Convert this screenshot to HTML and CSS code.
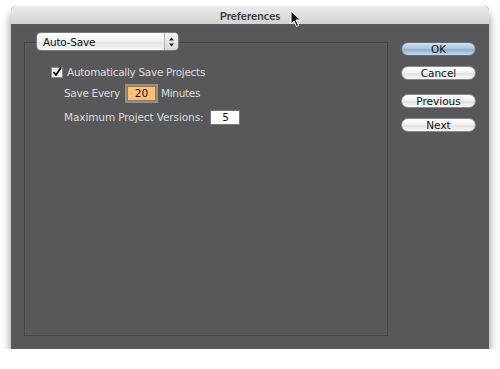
FILE: index.html
```html
<!DOCTYPE html>
<html>
<head>
    <title>Preferences</title>
    <link rel="stylesheet" href="styles.css">
</head>
<body>
    <div class="window">
        <div class="titlebar">
            <span class="title">Preferences</span>
        </div>
        <div class="content">
            <div class="main">
                <div class="popup">
                    <span class="popup-label">Auto-Save</span>
                    <span class="popup-arrows">
                        <svg width="7" height="10" viewBox="0 0 7 10">
                            <path d="M3.5 0.5 L6 3.5 L1 3.5 Z" fill="#222"/>
                            <path d="M3.5 9.5 L6 6.5 L1 6.5 Z" fill="#222"/>
                        </svg>
                    </span>
                </div>
                <div class="panel">
                    <div class="row check-row">
                        <span class="checkbox">
                            <svg width="10" height="10" viewBox="0 0 10 10">
                                <path d="M1.5 5 L4 8 L9 0.5" fill="none" stroke="#111" stroke-width="1.8"/>
                            </svg>
                        </span>
                        <span class="label">Automatically Save Projects</span>
                    </div>
                    <div class="row indent">
                        <span class="label">Save Every</span>
                        <span class="field field-focus">20</span>
                        <span class="label">Minutes</span>
                    </div>
                    <div class="row indent">
                        <span class="label wide">Maximum Project Versions:</span>
                        <span class="field field-white">5</span>
                    </div>
                </div>
            </div>
            <div class="buttons">
                <button class="btn btn-default">OK</button>
                <button class="btn">Cancel</button>
                <button class="btn btn-gap">Previous</button>
                <button class="btn">Next</button>
            </div>
        </div>
    </div>

    <!-- mouse pointer over the title bar -->
    <svg class="cursor" width="12" height="18" viewBox="0 0 12 18">
        <path d="M1 1 L1 14 L4 11 L6.5 16.5 L8.5 15.5 L6 10 L10.5 10 Z" fill="#111" stroke="#fff" stroke-width="1"/>
    </svg>
</body>
</html>
```

FILE: styles.css
```css
body {
    margin: 0;
    background-color: #ffffff;
    font-family: "DejaVu Sans", Verdana, sans-serif;
}

.window {
    width: 478px;
    margin: 6px 0 0 11px;
    border-radius: 5px 5px 0 0;
    background-color: #58585a;
    box-shadow: 0 7px 10px rgba(0, 0, 0, 0.45);
}

.titlebar {
    height: 18px;
    display: flex;
    align-items: center;
    justify-content: center;
    border-radius: 5px 5px 0 0;
    background: linear-gradient(#ececec, #d2d2d2);
    border-bottom: 1px solid #5a5a5a;
}

.title {
    font-family: Lato, "DejaVu Sans", sans-serif;
    font-size: 11.5px;
    font-weight: bold;
    color: #3c3c3c;
}

.content {
    display: flex;
    height: 303px;
    padding: 8px 13px 13px 13px;
}

.main {
    width: 364px;
    display: flex;
    flex-direction: column;
}

.popup {
    position: relative;
    z-index: 1;
    width: 141px;
    height: 17px;
    margin-left: 13px;
    display: flex;
    align-items: center;
    border-radius: 4px;
    background: linear-gradient(#ffffff, #f0f0f0 50%, #e2e2e2 51%, #f6f6f6);
    box-shadow: 0 0 0 1px #7a7a7a;
}

.popup-label {
    flex: 1;
    padding-left: 6px;
    font-size: 10.5px;
    color: #111;
    letter-spacing: -0.2px;
}

.popup-arrows {
    width: 13px;
    height: 17px;
    display: flex;
    align-items: center;
    justify-content: center;
    border-left: 1px solid #b4b4b4;
    background: linear-gradient(#f4f4f4, #d8d8d8);
    border-radius: 0 4px 4px 0;
}

.panel {
    flex: 1;
    margin-top: -8px;
    padding: 21px 0 0 26px;
    border: 1px solid #444446;
    box-shadow: inset 0 0 0 1px #5f5f61;
}

.row {
    display: flex;
    align-items: center;
    height: 16px;
    margin-bottom: 8px;
}

.indent {
    padding-left: 13px;
}

.check-row {
    margin-bottom: 5px;
}

.label {
    font-size: 10.5px;
    color: #dcdcdc;
    letter-spacing: -0.3px;
}

.wide {
    letter-spacing: -0.1px;
}

.checkbox {
    width: 10px;
    height: 9px;
    display: flex;
    align-items: center;
    justify-content: center;
    margin-right: 4px;
    background-color: #f2f2f2;
    border: 1px solid #888;
}

.field {
    display: flex;
    align-items: center;
    justify-content: center;
    font-size: 10.5px;
    color: #111;
}

.field-focus {
    width: 27px;
    height: 13px;
    margin: 0 5px 0 7px;
    background-color: #f8c07a;
    border: 1px solid #8a7a64;
    box-shadow: 0 0 0 2px #9a8e80;
}

.field-white {
    width: 28px;
    height: 13px;
    margin-left: 7px;
    background-color: #ffffff;
    border: 1px solid #777;
}

.buttons {
    display: flex;
    flex-direction: column;
    margin-left: 13px;
    padding-top: 9px;
}

.btn {
    width: 75px;
    height: 14px;
    margin-bottom: 10px;
    padding: 0;
    font-family: "DejaVu Sans", Verdana, sans-serif;
    font-size: 10.5px;
    color: #111;
    border: 1px solid #8a8a8a;
    border-radius: 7px;
    background: linear-gradient(#ffffff, #f2f2f2 50%, #e0e0e0 51%, #f8f8f8);
}

.btn-default {
    background: linear-gradient(#d4e2f0, #a8c0d8 50%, #8eacc8 51%, #c4d8ec);
    border-color: #5a6e84;
}

.btn-gap {
    margin-top: 4px;
}

.cursor {
    position: absolute;
    left: 290px;
    top: 10px;
}
```
